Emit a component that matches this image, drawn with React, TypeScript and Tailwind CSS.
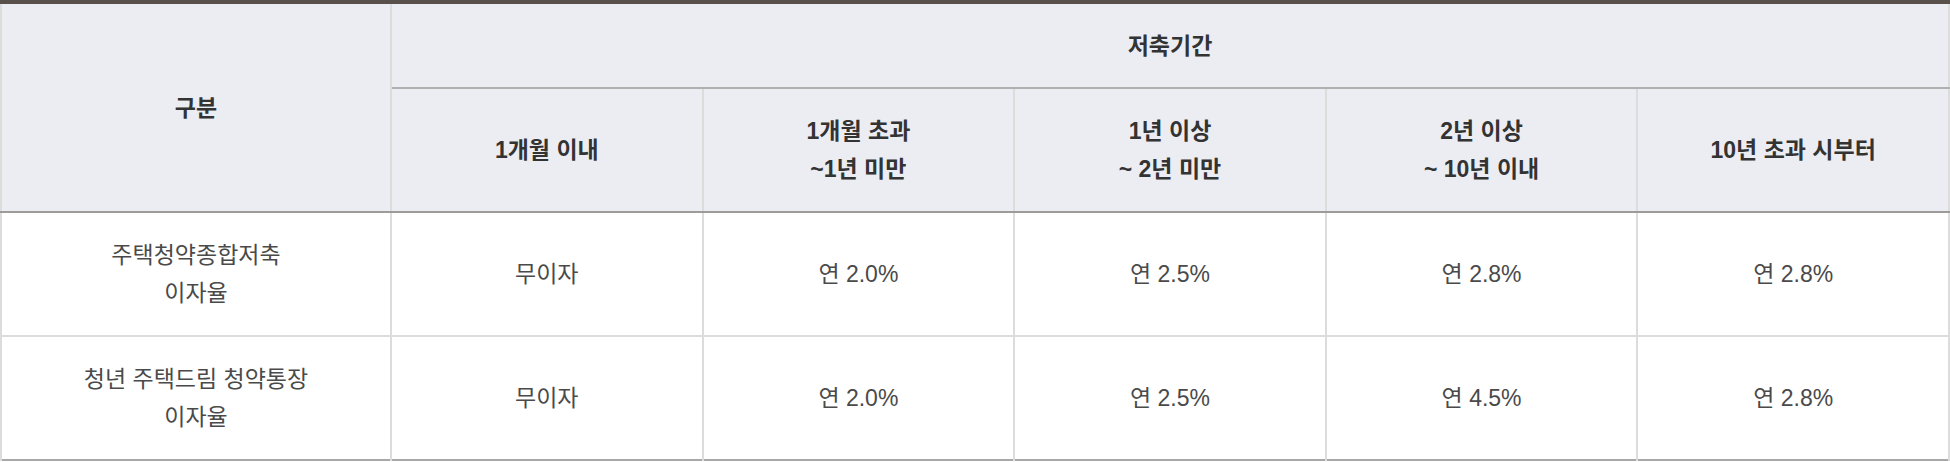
import React from 'react';

interface RateRow {
  name: string[];
  rates: string[];
}

const periods: string[][] = [
  ['1개월 이내'],
  ['1개월 초과', '~1년 미만'],
  ['1년 이상', '~ 2년 미만'],
  ['2년 이상', '~ 10년 이내'],
  ['10년 초과 시부터'],
];

const rows: RateRow[] = [
  { name: ['주택청약종합저축', '이자율'], rates: ['무이자', '연 2.0%', '연 2.5%', '연 2.8%', '연 2.8%'] },
  { name: ['청년 주택드림 청약통장', '이자율'], rates: ['무이자', '연 2.0%', '연 2.5%', '연 4.5%', '연 2.8%'] },
];

const Lines: React.FC<{ lines: string[] }> = ({ lines }) => (
  <>
    {lines.map((l, i) => (
      <span key={i} className="block">
        {l}
      </span>
    ))}
  </>
);

const App: React.FC = () => {
  return (
    <div className="w-[1950px] h-[462px] bg-white font-['Liberation_Sans','Noto_Sans_CJK_KR',sans-serif] text-[23px] leading-[38px]">
      <table className="w-full table-fixed border-collapse border-t-4 border-t-[#5a504b] text-center">
        <colgroup>
          <col className="w-[390px]" />
          <col />
          <col />
          <col />
          <col />
          <col />
        </colgroup>
        <thead className="bg-[#ecedf2] text-[#333] font-bold">
          <tr className="h-[86px]">
            <th
              rowSpan={2}
              className="border-l-2 border-l-[#dcdcdc] border-r-2 border-r-[#dcdcdc] border-b-2 border-b-[#9e9a98] font-bold"
            >
              구분
            </th>
            <th colSpan={5} className="border-b-2 border-b-[#b0b0b0] border-r-2 border-r-[#dcdcdc] font-bold">
              저축기간
            </th>
          </tr>
          <tr className="h-[124px]">
            {periods.map((p, i) => (
              <th
                key={i}
                className="border-r-2 border-r-[#dcdcdc] border-b-2 border-b-[#9e9a98] font-bold"
              >
                <Lines lines={p} />
              </th>
            ))}
          </tr>
        </thead>
        <tbody className="text-[#4a4a4a]">
          {rows.map((r, i) => (
            <tr
              key={i}
              className={
                i === rows.length - 1
                  ? 'h-[124px] border-b-2 border-b-[#a8a8a8]'
                  : 'h-[124px] border-b-2 border-b-[#dcdcdc]'
              }
            >
              <td className="border-l-2 border-l-[#dcdcdc] border-r-2 border-r-[#dcdcdc]">
                <Lines lines={r.name} />
              </td>
              {r.rates.map((v, j) => (
                <td key={j} className="border-r-2 border-r-[#dcdcdc]">
                  {v}
                </td>
              ))}
            </tr>
          ))}
        </tbody>
      </table>
    </div>
  );
};

export default App;
